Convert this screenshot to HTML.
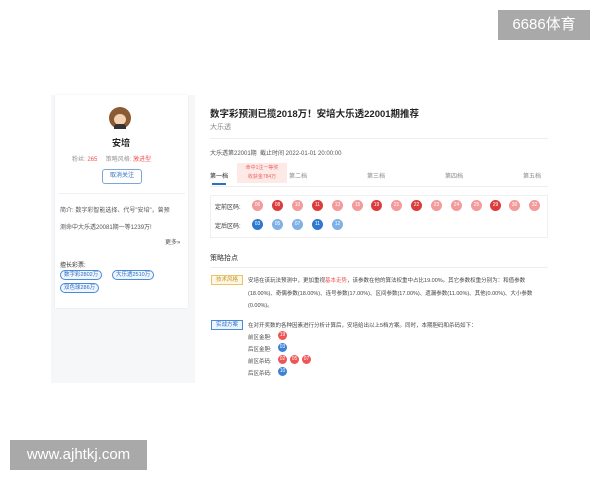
<!DOCTYPE html>
<html><head><meta charset="utf-8"><style>
*{margin:0;padding:0;box-sizing:border-box}
body{width:600px;height:480px;background:#fff;position:relative;overflow:hidden;font-family:"Liberation Sans","Noto Sans CJK SC",sans-serif;color:#333}
.a{position:absolute;white-space:nowrap}
.s{font-size:6px;color:#555}
.b{position:absolute;width:11px;height:11px;border-radius:50%;font-size:5px;color:#fff;text-align:center;line-height:11px}
.r1{background:#f39a9a}.r2{background:#dc3c3c}.u1{background:#7fb0e6}.u2{background:#2f78d0}
.tag{position:absolute;border:1px solid #4a8ad8;border-radius:6px;font-size:5.5px;color:#2f6fc0;padding:0 3px;height:10px;line-height:8px;background:#eef5ff}
</style></head><body>
<div class="a" style="left:51px;top:95px;width:144px;height:288px;background:#f6f7f9"></div>
<div class="a" style="left:55px;top:95px;width:133px;height:213px;background:#fff;box-shadow:0 0 2px rgba(0,0,0,0.08)"></div>
<div class="a" style="left:109px;top:107px;width:22px;height:22px;border-radius:50%;background:#8a5a35"></div>
<div class="a" style="left:114px;top:114px;width:12px;height:11px;border-radius:50%;background:#f2d2b0"></div>
<div class="a" style="left:114px;top:124px;width:12px;height:5px;background:#333;border-radius:3px 3px 0 0"></div>
<div class="a" style="left:112px;top:136px;font-size:9px;color:#222;font-weight:bold">安培</div>
<div class="a s" style="left:72px;top:154px;color:#999">粉丝: <span style="color:#e55">265</span>&nbsp;&nbsp;&nbsp;&nbsp;&nbsp;策略风格: <span style="color:#e55">激进型</span></div>
<div class="a" style="left:102px;top:169px;width:40px;height:15px;border:1px solid #7aa6dc;border-radius:3px;font-size:6px;color:#2f6fc0;text-align:center;line-height:13px">取消关注</div>
<div class="a" style="left:58px;top:193px;width:127px;height:1px;background:#f0f0f0"></div>
<div class="a s" style="left:60px;top:205px">简介: 数字彩智能选择、代号"安培"，曾预</div>
<div class="a s" style="left:60px;top:222px">测命中大乐透20081期一等1239万!</div>
<div class="a s" style="left:165px;top:237px">更多»</div>
<div class="a s" style="left:60px;top:260px;color:#333">擅长彩票:</div>
<div class="tag" style="left:60px;top:270px">数字彩2802万</div>
<div class="tag" style="left:112px;top:270px">大乐透2510万</div>
<div class="tag" style="left:60px;top:283px">双色球286万</div>

<div class="a" style="left:210px;top:106px;font-size:9.5px;font-weight:bold;color:#222">数字彩预测已揽2018万！安培大乐透22001期推荐</div>
<div class="a" style="left:210px;top:122px;font-size:7px;color:#888">大乐透</div>
<div class="a" style="left:210px;top:138px;width:338px;height:1px;background:#eee"></div>
<div class="a s" style="left:210px;top:148px">大乐透第22001期 &nbsp;截止时间 2022-01-01 20:00:00</div>
<div class="a s" style="left:210px;top:171px;color:#222">第一档</div>
<div class="a" style="left:212px;top:183px;width:14px;height:2px;background:#2f6fc0"></div>
<div class="a" style="left:237px;top:163px;width:50px;height:20px;background:#fde9e6;font-size:5px;color:#e66;text-align:center;line-height:9px;padding-top:1px">命中1注一等奖<br>收获金784万</div>
<div class="a s" style="left:289px;top:171px;color:#888">第二档</div>
<div class="a s" style="left:367px;top:171px;color:#888">第三档</div>
<div class="a s" style="left:445px;top:171px;color:#888">第四档</div>
<div class="a s" style="left:523px;top:171px;color:#888">第五档</div>
<div class="a" style="left:210px;top:186px;width:338px;height:1px;background:#eee"></div>
<div class="a" style="left:210px;top:195px;width:338px;height:43px;border:1px solid #f0f0f0"></div>
<div class="a s" style="left:215px;top:202px;color:#333">定前区码:</div>
<div class="a s" style="left:215px;top:221px;color:#333">定后区码:</div>
<div class="b r1" style="left:252px;top:200px">06</div>
<div class="b r2" style="left:272px;top:200px">08</div>
<div class="b r1" style="left:292px;top:200px">10</div>
<div class="b r2" style="left:312px;top:200px">11</div>
<div class="b r1" style="left:332px;top:200px">13</div>
<div class="b r1" style="left:352px;top:200px">15</div>
<div class="b r2" style="left:371px;top:200px">19</div>
<div class="b r1" style="left:391px;top:200px">21</div>
<div class="b r2" style="left:411px;top:200px">22</div>
<div class="b r1" style="left:431px;top:200px">23</div>
<div class="b r1" style="left:451px;top:200px">24</div>
<div class="b r1" style="left:471px;top:200px">25</div>
<div class="b r2" style="left:490px;top:200px">29</div>
<div class="b r1" style="left:509px;top:200px">30</div>
<div class="b r1" style="left:529px;top:200px">32</div>
<div class="b u2" style="left:252px;top:219px">03</div>
<div class="b u1" style="left:272px;top:219px">05</div>
<div class="b u1" style="left:292px;top:219px">07</div>
<div class="b u2" style="left:312px;top:219px">11</div>
<div class="b u1" style="left:332px;top:219px">12</div>

<div class="a" style="left:210px;top:253px;font-size:7px;color:#333">策略拾点</div>
<div class="a" style="left:210px;top:267px;width:338px;height:1px;background:#eee"></div>
<div class="a" style="left:211px;top:275px;width:32px;height:10px;border:1px solid #e8c46a;background:#fdf6e3;font-size:5.5px;color:#c9962a;text-align:center;line-height:8px">技术风格</div>
<div class="a" style="left:248px;top:275px;font-size:5.5px;color:#444;line-height:12.5px;white-space:normal;width:300px">安培在该玩法预测中，更加重视<span style="color:#e55">基本走势</span>，该参数在他的算法权重中占比19.00%。其它参数权重分别为：和值参数(18.00%)、奇偶参数(18.00%)、连号参数(17.00%)、区间参数(17.00%)、遗漏参数(11.00%)、其他(0.00%)、大小参数(0.00%)。</div>
<div class="a" style="left:211px;top:320px;width:32px;height:10px;border:1px solid #4a8ad8;background:#eef5ff;font-size:5.5px;color:#2f6fc0;text-align:center;line-height:8px">实战方案</div>
<div class="a" style="left:248px;top:321px;font-size:5.5px;color:#444">在对开奖数的各种因素进行分析计算后，安培给出以上5档方案。同时，本期胆码和杀码如下：</div>
<div class="a" style="left:248px;top:333px;font-size:5.5px;color:#444">前区金胆:</div>
<div class="b r2" style="left:278px;top:331px;width:9px;height:9px;line-height:9px;background:#e55">19</div>
<div class="a" style="left:248px;top:345px;font-size:5.5px;color:#444">后区金胆:</div>
<div class="b u2" style="left:278px;top:343px;width:9px;height:9px;line-height:9px;background:#3b82d6">03</div>
<div class="a" style="left:248px;top:357px;font-size:5.5px;color:#444">前区杀码:</div>
<div class="b" style="left:278px;top:355px;width:9px;height:9px;line-height:9px;background:#e55">02</div>
<div class="b" style="left:290px;top:355px;width:9px;height:9px;line-height:9px;background:#e55">05</div>
<div class="b" style="left:302px;top:355px;width:9px;height:9px;line-height:9px;background:#e55">07</div>
<div class="a" style="left:248px;top:369px;font-size:5.5px;color:#444">后区杀码:</div>
<div class="b" style="left:278px;top:367px;width:9px;height:9px;line-height:9px;background:#3b82d6">10</div>

<div class="a" style="left:498px;top:10px;width:92px;height:30px;background:#a9a9a9;color:#fff;font-size:15px;text-align:center;line-height:30px">6686体育</div>
<div class="a" style="left:10px;top:440px;width:137px;height:30px;background:#a9a9a9;color:#fff;font-size:15px;text-align:center;line-height:30px">www.ajhtkj.com</div>
</body></html>
